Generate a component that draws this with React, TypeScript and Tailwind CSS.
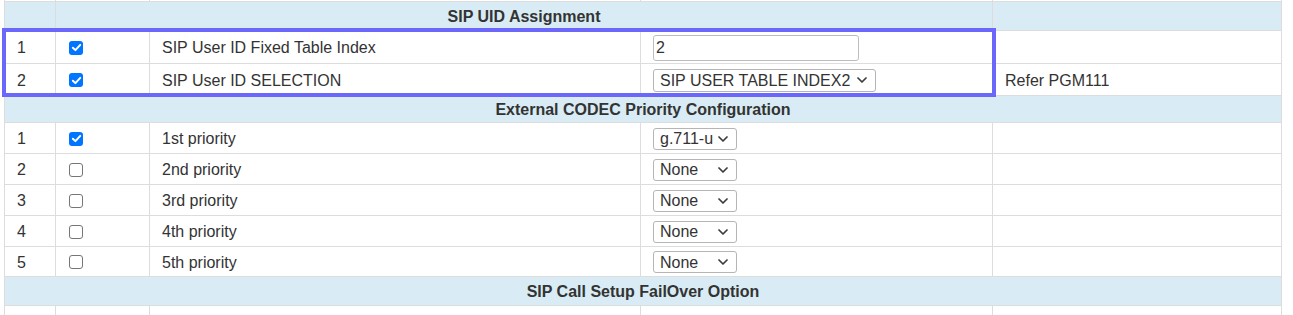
import React from "react";

const F = { fontFamily: '"Liberation Sans", Arial, sans-serif' };

function Check({ on }: { on: boolean }) {
  return on ? (
    <span className="ml-[1px] flex h-[14px] w-[14px] items-center justify-center rounded-[3px] bg-[#0075ff]">
      <svg width="11" height="11" viewBox="0 0 10 10">
        <path d="M1.7 5.2 L4 7.4 L8.4 2.6" fill="none" stroke="#fff" strokeWidth="1.8" strokeLinecap="round" strokeLinejoin="round" />
      </svg>
    </span>
  ) : (
    <span className="ml-[1px] block h-[14px] w-[14px] rounded-[3px] border border-[#767676] bg-white" />
  );
}

function Chevron() {
  return (
    <svg width="10" height="6" viewBox="0 0 10 6" className="shrink-0">
      <path d="M1 1 L5 5 L9 1" fill="none" stroke="#3b3b3b" strokeWidth="1.7" strokeLinecap="round" strokeLinejoin="round" />
    </svg>
  );
}

function Select({ value, w, h }: { value: string; w: string; h: string }) {
  return (
    <div className={`flex items-center justify-between rounded-[3px] border border-[#b5b5b5] bg-white pl-[6px] pr-[8px] text-[16px] text-[#333] ${w} ${h}`}>
      <span className="pt-[1px] leading-none">{value}</span>
      <Chevron />
    </div>
  );
}

function DataRow({
  h,
  n,
  on,
  label,
  control,
  note,
}: {
  h: string;
  n: string;
  on: boolean;
  label: string;
  control?: React.ReactNode;
  note?: string;
}) {
  return (
    <div className={`flex border-b border-[#dddddd] bg-white ${h}`}>
      <div className="flex w-[51px] shrink-0 items-center border-r border-[#dddddd] pl-[12px] pt-[2px]">{n}</div>
      <div className="flex w-[94px] shrink-0 items-center border-r border-[#dddddd] pl-[12px] pt-[1px]">
        {n && <Check on={on} />}
      </div>
      <div className="flex w-[491px] shrink-0 items-center border-r border-[#dddddd] pl-[12px] pt-[2px]">{label}</div>
      <div className="flex w-[352px] shrink-0 items-center border-r border-[#dddddd] pl-[12px] pt-[1px]">{control}</div>
      <div className="flex flex-1 items-center pl-[12px] pt-[2px]">{note}</div>
    </div>
  );
}

function FullHeader({ h, title }: { h: string; title: string }) {
  return (
    <div className={`flex items-center justify-center border-b border-[#dddddd] bg-[#d9ecf5] pt-[1px] font-bold ${h}`}>
      {title}
    </div>
  );
}

export default function App() {
  const codec = [
    { n: "1", on: true, label: "1st priority", v: "g.711-u" },
    { n: "2", on: false, label: "2nd priority", v: "None" },
    { n: "3", on: false, label: "3rd priority", v: "None" },
    { n: "4", on: false, label: "4th priority", v: "None" },
    { n: "5", on: false, label: "5th priority", v: "None" },
  ];
  const codecH = ["h-[31px]", "h-[31px]", "h-[31px]", "h-[31px]", "h-[30px]"];
  return (
    <div className="relative h-[315px] w-[1293px] overflow-hidden bg-white text-[16px] text-[#333333]" style={F}>
      <div className="ml-[4px] w-[1278px] border-x border-[#dddddd]">
        {/* partial row above */}
        <div className="flex h-[2px] border-b border-[#dddddd]">
          <div className="w-[51px] shrink-0 border-r border-[#dddddd]" />
          <div className="w-[94px] shrink-0 border-r border-[#dddddd]" />
          <div className="w-[491px] shrink-0 border-r border-[#dddddd]" />
          <div className="w-[352px] shrink-0 border-r border-[#dddddd]" />
          <div className="flex-1" />
        </div>
        {/* SIP UID Assignment header */}
        <div className="flex h-[29px] border-b border-[#dddddd] bg-[#d9ecf5] font-bold">
          <div className="w-[51px] shrink-0 border-r border-[#dddddd]" />
          <div className="flex w-[937px] shrink-0 items-center justify-center border-r border-[#dddddd] pt-[1px]">
            SIP UID Assignment
          </div>
          <div className="flex-1" />
        </div>
        <DataRow
          h="h-[33px]"
          n="1"
          on
          label="SIP User ID Fixed Table Index"
          control={
            <div className="flex h-[26px] w-[206px] items-center rounded-[3px] border border-[#bdbdbd] bg-white pl-[2px] pt-[1px] text-[16px]">
              2
            </div>
          }
        />
        <DataRow
          h="h-[32px]"
          n="2"
          on
          label="SIP User ID SELECTION"
          control={<Select value="SIP USER TABLE INDEX2" w="w-[223px]" h="h-[23px]" />}
          note="Refer PGM111"
        />
        <FullHeader h="h-[27px]" title="External CODEC Priority Configuration" />
        {codec.map((c, i) => (
          <DataRow
            key={c.n}
            h={codecH[i]}
            n={c.n}
            on={c.on}
            label={c.label}
            control={<Select value={c.v} w="w-[84px]" h="h-[22px]" />}
          />
        ))}
        <FullHeader h="h-[29px]" title="SIP Call Setup FailOver Option" />
        <DataRow
          h="h-[31px]"
          n=""
          on={false}
          label=""
          control={<div className="mt-[12px] h-[26px] w-[206px] self-start rounded-[3px] border border-[#bdbdbd] bg-white" />}
        />
      </div>
      {/* highlight outline */}
      <div className="pointer-events-none absolute left-[2px] top-[28px] h-[69px] w-[994px] border-[4px] border-[#6c67fb]" />
    </div>
  );
}
